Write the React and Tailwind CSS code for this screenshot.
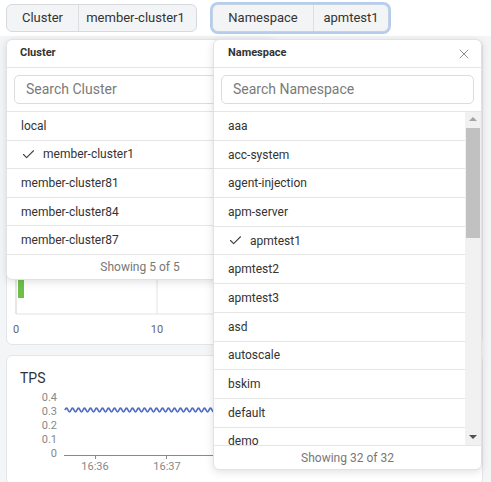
import React from "react";
import { Check, X } from "lucide-react";

const clusters = ["local", "member-cluster1", "member-cluster81", "member-cluster84", "member-cluster87"];

const namespaces = [
  "aaa",
  "acc-system",
  "agent-injection",
  "apm-server",
  "apmtest1",
  "apmtest2",
  "apmtest3",
  "asd",
  "autoscale",
  "bskim",
  "default",
  "demo",
];

// wavy TPS line
const wave = (() => {
  let d = "M65 410";
  for (let x = 65; x < 215; x += 6) {
    d += ` Q${x + 1.5} 406.5 ${x + 3} 410 Q${x + 4.5} 413.5 ${x + 6} 410`;
  }
  return d;
})();

const Item = ({ label, selected, h }) => (
  <div className={`flex items-center border-b border-[#e6e6e6] px-[14px] text-[12px] text-[#333] ${h}`}>
    {selected && <Check size={15} strokeWidth={1.8} className="mr-[7px] text-[#444]" />}
    <span>{label}</span>
  </div>
);

const SearchBox = ({ placeholder }) => (
  <div className="border-b border-[#e6e6e6] px-[7px] py-[7px]">
    <div className="flex h-[29px] items-center rounded-[5px] border border-[#dcdcdc] px-[11px] text-[14px] text-[#7a7a7a]">
      {placeholder}
    </div>
  </div>
);

export default function App() {
  return (
    <div className="relative h-[482px] w-[491px] overflow-hidden bg-[#f4f5f7] font-['Roboto',sans-serif]">
      {/* Top selectors */}
      <div className="flex h-[36px] items-start gap-[15px] bg-white pl-[6px] pt-[4px]">
        <div className="flex h-[28px] w-[191px] rounded-[6px] border border-[#d6d9de] bg-[#f3f4f6] text-[13px] text-[#333]">
          <div className="flex w-[72px] items-center justify-center border-r border-[#dcdee2]">Cluster</div>
          <div className="flex flex-1 items-center justify-center pr-[4px]">member-cluster1</div>
        </div>
        <div className="flex h-[28px] w-[177px] rounded-[6px] border border-[#c6d2e2] bg-[#f3f4f6] text-[13px] text-[#333] ring-2 ring-[#b3cdf0]">
          <div className="flex w-[101px] items-center justify-center border-r border-[#dcdee2]">Namespace</div>
          <div className="flex flex-1 items-center justify-center">apmtest1</div>
        </div>
      </div>

      {/* Background cards */}
      <div className="flex flex-col gap-[10px] px-[6px] pt-[4px]">
        <div className="h-[305px] w-[477px] rounded-[6px] border border-[#e4e5e8] bg-white">
          <div className="h-[27px] border-b border-[#e8e8e8]" />
          <div className="h-[44px] border-b border-[#e8e8e8]" />
          <svg width="477" height="232" className="block">
            <line x1="150" y1="0" x2="150" y2="202" stroke="#e3e3e3" />
            <line x1="9" y1="202" x2="470" y2="202" stroke="#e3e3e3" />
            <line x1="9" y1="160" x2="9" y2="202" stroke="#cfcfcf" />
            <rect x="11" y="167" width="6" height="19" fill="#6cc04a" />
            <text x="9" y="221" fontSize="11" fill="#666" textAnchor="middle" fontFamily="Roboto">0</text>
            <text x="150" y="221" fontSize="11" fill="#666" textAnchor="middle" fontFamily="Roboto">10</text>
          </svg>
        </div>
        <div className="h-[130px] w-[477px] rounded-[6px] border border-[#e4e5e8] bg-white px-[13px] pt-[12px]">
          <div className="text-[14px] text-[#333]">TPS</div>
        </div>
      </div>

      {/* TPS chart */}
      <svg width="491" height="482" className="pointer-events-none absolute left-0 top-0">
        {[
          ["0.4", 401],
          ["0.3", 415],
          ["0.2", 429],
          ["0.1", 443],
          ["0", 457],
        ].map(([t, y]) => (
          <text key={t} x="57" y={y} fontSize="11" fill="#888" textAnchor="end" fontFamily="Roboto">
            {t}
          </text>
        ))}
        <line x1="64" y1="455.5" x2="215" y2="455.5" stroke="#8a8a8a" />
        <line x1="95.5" y1="455" x2="95.5" y2="459" stroke="#8a8a8a" />
        <line x1="166.5" y1="455" x2="166.5" y2="459" stroke="#8a8a8a" />
        <text x="95" y="470" fontSize="11" fill="#888" textAnchor="middle" fontFamily="Roboto">16:36</text>
        <text x="167" y="470" fontSize="11" fill="#888" textAnchor="middle" fontFamily="Roboto">16:37</text>
        <path d={wave} stroke="#5470c6" strokeWidth="1.8" fill="none" />
      </svg>

      {/* Cluster dropdown */}
      <div className="absolute left-[6px] top-[39px] flex w-[268px] flex-col overflow-hidden rounded-[6px] border border-[#e2e2e2] bg-white shadow-[0_2px_8px_rgba(0,0,0,0.12)]">
        <div className="flex h-[28px] items-center border-b border-[#e6e6e6] px-[13px] text-[11px] font-bold text-[#333]">
          Cluster
        </div>
        <SearchBox placeholder="Search Cluster" />
        {clusters.map((c) => (
          <Item key={c} label={c} selected={c === "member-cluster1"} h="h-[28.6px]" />
        ))}
        <div className="flex h-[24px] items-center justify-center text-[12px] text-[#777]">Showing 5 of 5</div>
      </div>

      {/* Namespace dropdown */}
      <div className="absolute left-[213px] top-[39px] flex w-[269px] flex-col overflow-hidden rounded-[6px] border border-[#e2e2e2] bg-white shadow-[0_2px_8px_rgba(0,0,0,0.12)]">
        <div className="flex h-[28px] items-center justify-between border-b border-[#e6e6e6] pl-[14px] pr-[9px] text-[11px] font-bold text-[#333]">
          <span>Namespace</span>
          <X size={16} strokeWidth={1.4} className="text-[#888]" />
        </div>
        <SearchBox placeholder="Search Namespace" />
        <div className="flex h-[334px] border-b border-[#e6e6e6]">
          <div className="flex-1 overflow-hidden">
            {namespaces.map((n) => (
              <Item key={n} label={n} selected={n === "apmtest1"} h="h-[28.7px] shrink-0" />
            ))}
          </div>
          <div className="flex w-[16px] flex-col items-center bg-[#f1f1f1]">
            <div className="mt-[5px] h-0 w-0 border-x-[4px] border-b-[4px] border-x-transparent border-b-[#a3a3a3]" />
            <div className="mt-[7px] h-[110px] w-[14px] bg-[#c1c1c1]" />
            <div className="flex-1" />
            <div className="mb-[6px] h-0 w-0 border-x-[4px] border-t-[4px] border-x-transparent border-t-[#505050]" />
          </div>
        </div>
        <div className="flex h-[23px] items-center justify-center text-[12px] text-[#777]">Showing 32 of 32</div>
      </div>
    </div>
  );
}
